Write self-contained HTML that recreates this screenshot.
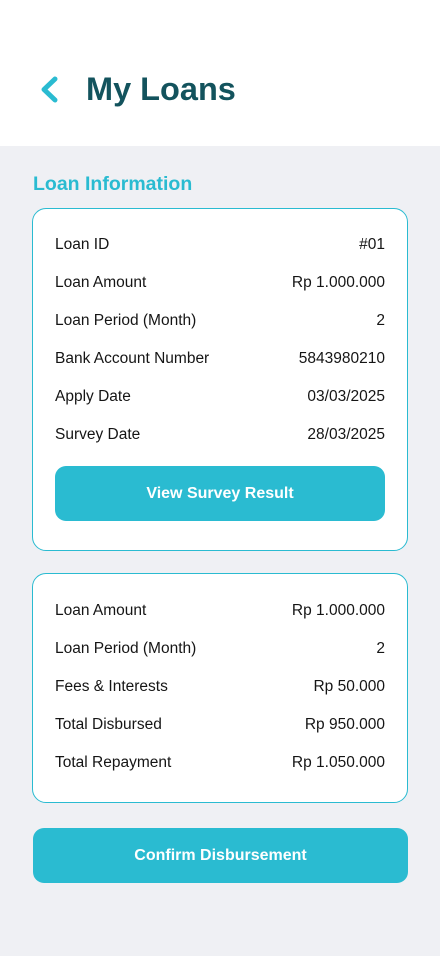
<!DOCTYPE html>
<html><head><style>
*{margin:0;padding:0;box-sizing:border-box}
body{width:440px;height:956px;background:#eff0f4;font-family:"Liberation Sans",sans-serif;position:relative;overflow:hidden}
.hdr{position:absolute;left:0;top:0;width:440px;height:146px;background:#fff}
.title{position:absolute;left:86px;top:71px;font-size:32.5px;font-weight:bold;color:#13535d;letter-spacing:0px}
.sec{position:absolute;left:33px;top:173px;font-size:19.5px;font-weight:bold;color:#2abbd1}
.card{position:absolute;left:32px;width:376px;background:#fff;border:1px solid #2abbd1;border-radius:14px}
.row{position:absolute;left:22px;right:22px;display:flex;justify-content:space-between;font-size:15.5px;color:#151515}
.btn{position:absolute;background:#2abbd1;color:#fff;font-weight:bold;font-size:16px;border-radius:11px;display:flex;align-items:center;justify-content:center}
</style></head><body>
<div class="hdr">
<svg style="position:absolute;left:38px;top:76px" width="22" height="28" viewBox="0 0 22 28"><path d="M17 3 L6 13.5 L17 24" stroke="#2abbd1" stroke-width="5" fill="none" stroke-linecap="round" stroke-linejoin="round"/></svg>
<div class="title">My Loans</div>
</div>
<div class="sec">Loan Information</div>
<div class="card" style="top:208px;height:343px">
<div class="row" style="top:27px"><span>Loan ID</span><span>#01</span></div>
<div class="row" style="top:65px"><span>Loan Amount</span><span>Rp 1.000.000</span></div>
<div class="row" style="top:103px"><span>Loan Period (Month)</span><span>2</span></div>
<div class="row" style="top:141px"><span>Bank Account Number</span><span>5843980210</span></div>
<div class="row" style="top:179px"><span>Apply Date</span><span>03/03/2025</span></div>
<div class="row" style="top:217px"><span>Survey Date</span><span>28/03/2025</span></div>
<div class="btn" style="left:22px;top:257px;width:330px;height:55px">View Survey Result</div>
</div>
<div class="card" style="top:573px;height:230px">
<div class="row" style="top:28px"><span>Loan Amount</span><span>Rp 1.000.000</span></div>
<div class="row" style="top:66px"><span>Loan Period (Month)</span><span>2</span></div>
<div class="row" style="top:104px"><span>Fees &amp; Interests</span><span>Rp 50.000</span></div>
<div class="row" style="top:142px"><span>Total Disbursed</span><span>Rp 950.000</span></div>
<div class="row" style="top:180px"><span>Total Repayment</span><span>Rp 1.050.000</span></div>
</div>
<div class="btn" style="left:33px;top:828px;width:375px;height:55px">Confirm Disbursement</div>
</body></html>
